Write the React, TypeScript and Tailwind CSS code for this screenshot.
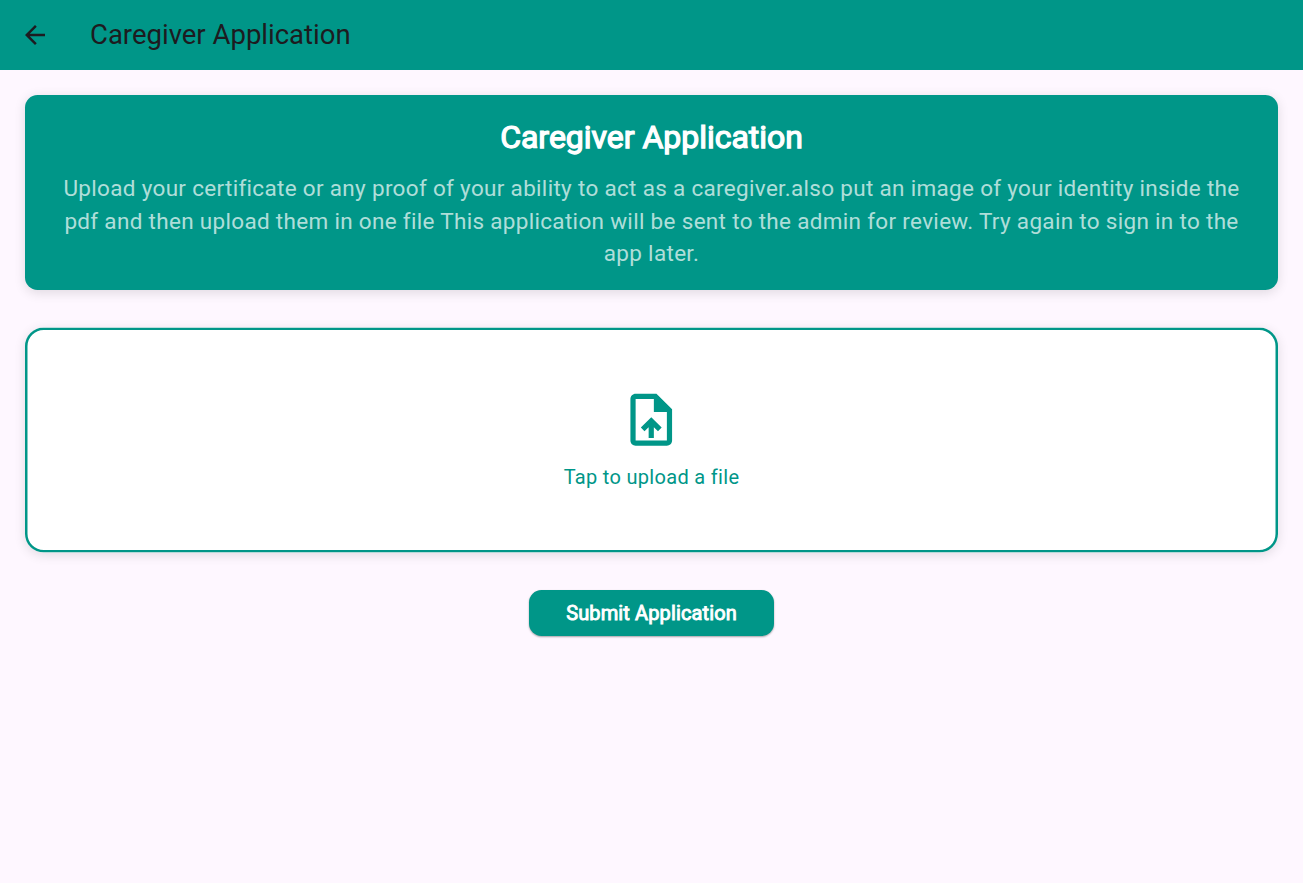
import React from "react";

export default function App() {
  return (
    <div className="flex h-[883px] w-full flex-col bg-[#fef7ff] font-['Roboto',sans-serif]">
      <header className="flex h-[70px] shrink-0 items-center bg-[#009688] pl-5 text-[#1d1b20]">
        <svg className="h-[30px] w-[30px]" viewBox="0 0 24 24" fill="currentColor">
          <path d="M20 11H7.83l5.59-5.59L12 4l-8 8 8 8 1.41-1.41L7.83 13H20v-2z" />
        </svg>
        <h1 className="ml-10 pb-[2px] text-[27.5px] leading-[35px]">Caregiver Application</h1>
      </header>
      <main className="flex flex-col items-center px-[25px] pt-[25px]">
        <section className="h-[195px] w-full rounded-[12.5px] bg-[#009688] px-[25px] pt-[21px] text-center shadow-[0_2.5px_12px_rgba(0,0,0,0.12)]">
          <h2 className="text-[32px] leading-[42px] font-normal tracking-[-0.03px] text-white [-webkit-text-stroke:1.25px_white]">Caregiver Application</h2>
          <p className="mt-[14px] text-[22.5px] leading-[32.5px] tracking-[0.3125px] text-white/70">
            Upload your certificate or any proof of your ability to act as a caregiver.also put an image of your identity inside the pdf and then upload them in one file This application will be sent to the admin for review. Try again to sign in to the app later.
          </p>
        </section>
        <button className="mt-[37.5px] flex h-[225px] w-full -translate-y-[0.5px] flex-col items-center rounded-[18.75px] bg-white pt-[61px] text-[#009688] shadow-[inset_0_0_0_2.5px_#009688,0_2.5px_12px_rgba(0,0,0,0.12)]">
          <svg className="h-[62.5px] w-[62.5px]" viewBox="0 0 24 24" fill="currentColor">
            <path d="M14 2H6c-1.1 0-2 .9-2 2v16c0 1.1.9 2 2 2h12c1.1 0 2-.9 2-2V8l-6-6zm4 18H6V4h7v5h5v11zM8 15.01l1.41 1.41L11 14.84V19h2v-4.16l1.59 1.59L16 15.01 12.01 11 8 15.01z" />
          </svg>
          <span className="mt-[12px] text-[20px] leading-[29px] tracking-[0.3125px]">Tap to upload a file</span>
        </button>
        <button className="mt-[37.5px] h-[46px] w-[245.5px] rounded-[12.5px] bg-[#009688] text-[20px] font-normal tracking-[0.125px] text-white shadow-[0_1px_2px_rgba(0,0,0,0.35)] [-webkit-text-stroke:0.9px_white]">
          Submit Application
        </button>
      </main>
    </div>
  );
}
